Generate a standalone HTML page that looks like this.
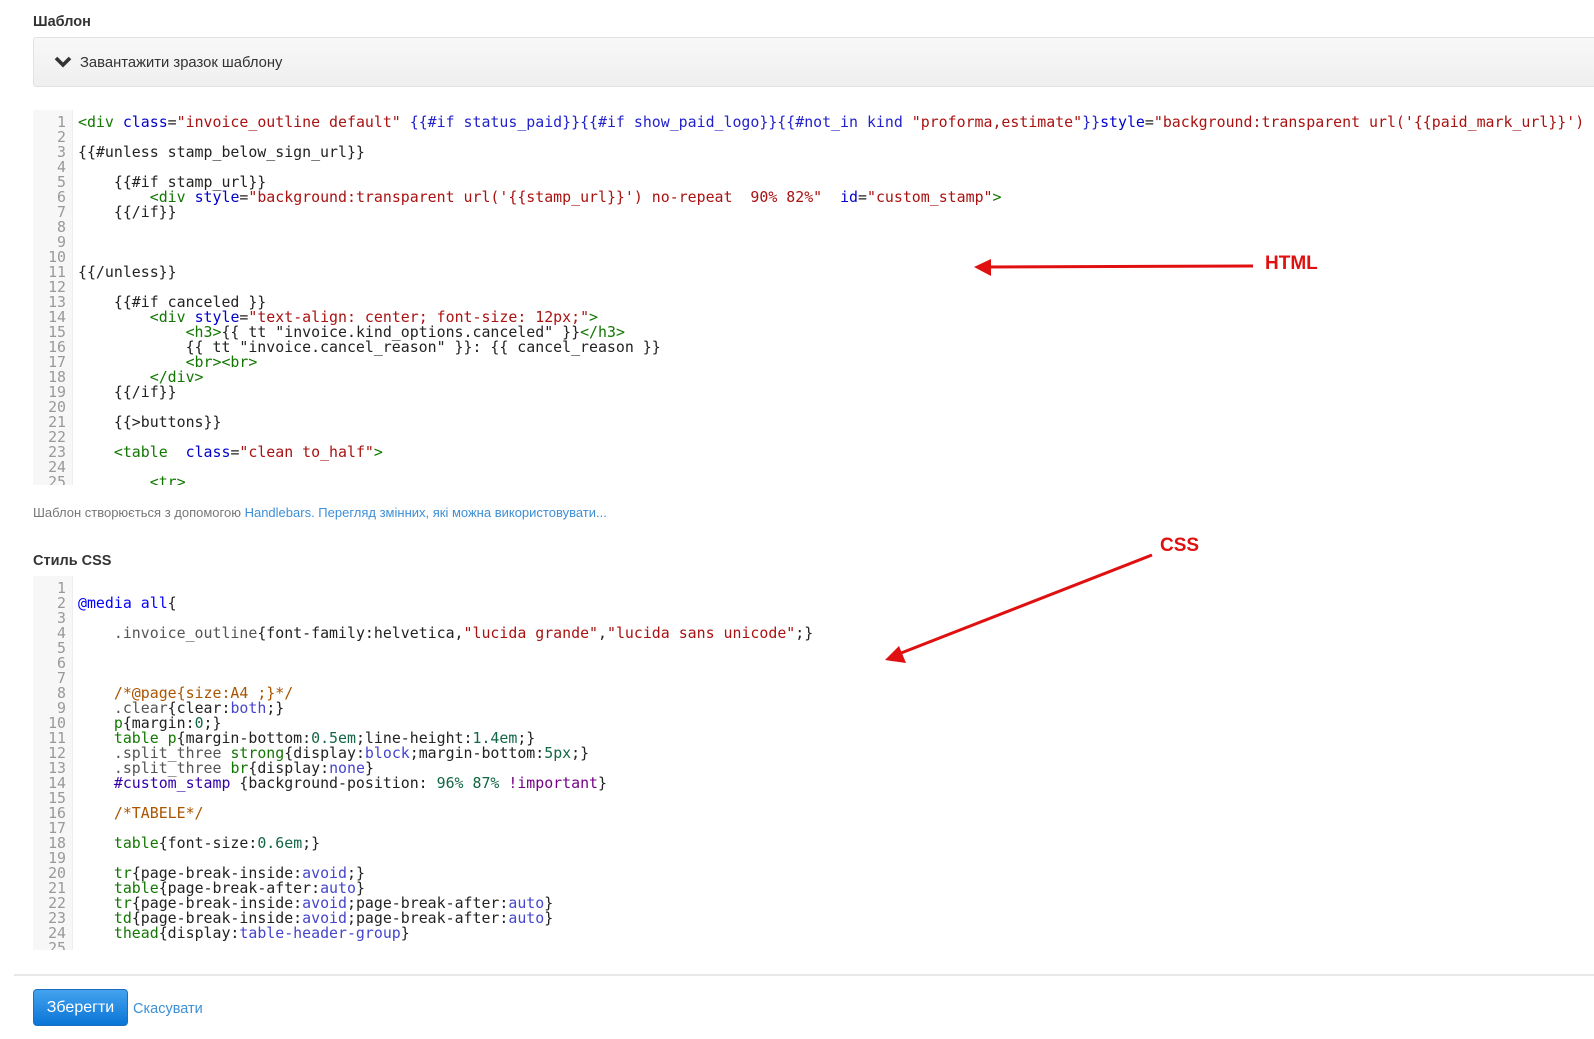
<!DOCTYPE html>
<html><head><meta charset="utf-8"><style>
body{margin:0;background:#fff;width:1594px;height:1039px;overflow:hidden;position:relative;font-family:"Liberation Sans",sans-serif;color:#333}
.lbl{position:absolute;left:33px;font-weight:bold;font-size:14.5px;color:#333}
.panel{position:absolute;left:33px;top:37px;width:1600px;height:48px;background:linear-gradient(#f8f8f8,#efefef);border:1px solid #e2e2e2;border-radius:3px}
.panel span{position:absolute;left:46px;top:17px;font-size:14.8px;color:#333}
.ed{position:absolute;left:33px;width:1570px;overflow:hidden;font-family:"DejaVu Sans Mono",monospace;font-size:14.9px;line-height:15px;color:#222}
.gut{position:absolute;left:0;top:0;width:39px;height:100%;background:#f7f7f7;border-right:1px solid #eee}
.ln{position:absolute;left:0;width:33px;text-align:right;color:#999}
.code{position:absolute;left:45px;white-space:pre}
.t{color:#170}.a{color:#00c}.s{color:#a11}.h{color:#22c}.q{color:#555}.n{color:#164}.c{color:#a50}.k{color:#708}.b{color:#30a}.d{color:#00f}.p{color:#44c}
.help{position:absolute;left:33px;top:505px;font-size:13px;color:#777}
.help a{color:#3d8fd6;text-decoration:none}
hr{position:absolute;left:14px;top:974px;width:1600px;margin:0;border:0;border-top:2px solid #e8e8e8}
.btn{position:absolute;left:33px;top:989px;width:95px;height:37px;border-radius:4px;background:linear-gradient(#44a3ef,#0a75d6);border:1px solid #1a6fc0;box-sizing:border-box;color:#fff;font-size:16px;text-align:center;line-height:35px}
.cancel{position:absolute;left:133px;top:1001px;font-size:14.5px;color:#3d8fd6}
.red{position:absolute;color:#e01010;font-weight:bold;font-size:19px}
</style></head><body>
<div class="lbl" style="top:14px">Шаблон</div>
<div class="panel"><svg style="position:absolute;left:20px;top:18px" width="18" height="12" viewBox="0 0 18 12"><path d="M2 2 L9 9 L16 2" stroke="#333" stroke-width="3.6" fill="none"/></svg><span>Завантажити зразок шаблону</span></div>

<div class="ed" style="top:110px;height:375px"><div class="gut"></div>
<div class="ln" style="top:5px">1<br>2<br>3<br>4<br>5<br>6<br>7<br>8<br>9<br>10<br>11<br>12<br>13<br>14<br>15<br>16<br>17<br>18<br>19<br>20<br>21<br>22<br>23<br>24<br>25</div>
<div class="code" style="top:5px"><span class="t">&lt;div</span> <span class="a">class</span>=<span class="s">"invoice_outline default"</span> <span class="h">{{#if status_paid}}{{#if show_paid_logo}}{{#not_in kind </span><span class="s">"proforma,estimate"</span><span class="h">}}</span><span class="a">style</span>=<span class="s">"background:transparent url('{{paid_mark_url}}')</span>

{{#unless stamp_below_sign_url}}

    {{#if stamp_url}}
        <span class="t">&lt;div</span> <span class="a">style</span>=<span class="s">"background:transparent url('{{stamp_url}}') no-repeat  90% 82%"</span>  <span class="a">id</span>=<span class="s">"custom_stamp"</span><span class="t">&gt;</span>
    {{/if}}



{{/unless}}

    {{#if canceled }}
        <span class="t">&lt;div</span> <span class="a">style</span>=<span class="s">"text-align: center; font-size: 12px;"</span><span class="t">&gt;</span>
            <span class="t">&lt;h3&gt;</span>{{ tt "invoice.kind_options.canceled" }}<span class="t">&lt;/h3&gt;</span>
            {{ tt "invoice.cancel_reason" }}: {{ cancel_reason }}
            <span class="t">&lt;br&gt;&lt;br&gt;</span>
        <span class="t">&lt;/div&gt;</span>
    {{/if}}

    {{&gt;buttons}}

    <span class="t">&lt;table</span>  <span class="a">class</span>=<span class="s">"clean to_half"</span><span class="t">&gt;</span>

        <span class="t">&lt;tr&gt;</span></div></div>

<div class="help">Шаблон створюється з допомогою <a>Handlebars. Перегляд змінних, які можна використовувати...</a></div>
<div class="lbl" style="top:553px">Стиль CSS</div>

<div class="ed" style="top:576px;height:374px"><div class="gut"></div>
<div class="ln" style="top:5px">1<br>2<br>3<br>4<br>5<br>6<br>7<br>8<br>9<br>10<br>11<br>12<br>13<br>14<br>15<br>16<br>17<br>18<br>19<br>20<br>21<br>22<br>23<br>24<br>25</div>
<div class="code" style="top:5px">
<span class="d">@media</span> <span class="d">all</span>{

    <span class="q">.invoice_outline</span>{font-family:helvetica,<span class="s">"lucida grande"</span>,<span class="s">"lucida sans unicode"</span>;}



    <span class="c">/*@page{size:A4 ;}*/</span>
    <span class="q">.clear</span>{clear:<span class="p">both</span>;}
    <span class="t">p</span>{margin:<span class="n">0</span>;}
    <span class="t">table p</span>{margin-bottom:<span class="n">0.5em</span>;line-height:<span class="n">1.4em</span>;}
    <span class="q">.split_three</span> <span class="t">strong</span>{display:<span class="p">block</span>;margin-bottom:<span class="n">5px</span>;}
    <span class="q">.split_three</span> <span class="t">br</span>{display:<span class="p">none</span>}
    <span class="b">#custom_stamp</span> {background-position: <span class="n">96% 87%</span> <span class="k">!important</span>}

    <span class="c">/*TABELE*/</span>

    <span class="t">table</span>{font-size:<span class="n">0.6em</span>;}

    <span class="t">tr</span>{page-break-inside:<span class="p">avoid</span>;}
    <span class="t">table</span>{page-break-after:<span class="p">auto</span>}
    <span class="t">tr</span>{page-break-inside:<span class="p">avoid</span>;page-break-after:<span class="p">auto</span>}
    <span class="t">td</span>{page-break-inside:<span class="p">avoid</span>;page-break-after:<span class="p">auto</span>}
    <span class="t">thead</span>{display:<span class="p">table-header-group</span>}
</div></div>

<svg style="position:absolute;left:0;top:0" width="1594" height="1039">
<line x1="1253" y1="266" x2="985" y2="267" stroke="#e01010" stroke-width="3"/>
<polygon points="974,267 991,259 991,276" fill="#e01010"/>
<line x1="1152" y1="555" x2="896" y2="655" stroke="#e01010" stroke-width="3"/>
<polygon points="885,660 899,646 906,663" fill="#e01010"/>
</svg>
<div class="red" style="left:1265px;top:253px">HTML</div>
<div class="red" style="left:1160px;top:535px">CSS</div>

<hr>
<div class="btn">Зберегти</div>
<div class="cancel">Скасувати</div>
</body></html>
